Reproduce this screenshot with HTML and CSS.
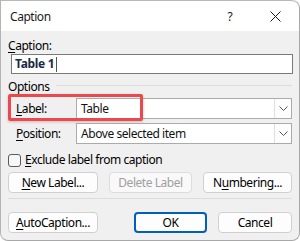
FILE: index.html
```html
<!DOCTYPE html>
<html>
<head>
<meta charset="utf-8">
<link rel="stylesheet" href="styles.css">
</head>
<body>
<div class="window">
  <div class="titlebar">
    <span class="title">Caption</span>
    <span class="help">?</span>
    <span class="close">
      <svg width="11" height="11" viewBox="0 0 11 11"><path d="M0.5 0.5L10.5 10.5M10.5 0.5L0.5 10.5" stroke="#1a1a1a" stroke-width="1" fill="none"/></svg>
    </span>
  </div>
  <div class="content">
    <div class="lbl caption-lbl"><u>C</u>aption:</div>
    <div class="textbox"><span class="tb-text">Table 1</span><span class="caret"></span></div>
    <div class="group-head"><span>Options</span><span class="group-line"></span></div>
    <div class="field-row row-label">
      <span class="field-lbl"><u>L</u>abel:</span>
      <div class="combo"><span class="combo-text">Table</span><span class="drop"><svg width="9" height="5" viewBox="0 0 9 5"><path d="M0.5 0.5L4.5 4.5L8.5 0.5" stroke="#555" fill="none"/></svg></span></div>
      <div class="highlight"></div>
    </div>
    <div class="field-row row-pos">
      <span class="field-lbl"><u>P</u>osition:</span>
      <div class="combo"><span class="combo-text">Above selected item</span><span class="drop"><svg width="9" height="5" viewBox="0 0 9 5"><path d="M0.5 0.5L4.5 4.5L8.5 0.5" stroke="#555" fill="none"/></svg></span></div>
    </div>
    <div class="check-row"><span class="checkbox"></span><span><u>E</u>xclude label from caption</span></div>
    <div class="btn-row row1">
      <button class="btn w-new"><u>N</u>ew Label...</button>
      <button class="btn w-del disabled">Delete Label</button>
      <button class="btn w-num">N<u>u</u>mbering...</button>
    </div>
    <div class="sep"></div>
    <div class="btn-row row2">
      <button class="btn w-auto"><u>A</u>utoCaption...</button>
      <button class="btn w-ok default">OK</button>
      <button class="btn w-cancel">Cancel</button>
    </div>
  </div>
</div>
</body>
</html>
```
FILE: styles.css
```css
* { box-sizing: border-box; }
html, body { margin: 0; padding: 0; background: #ffffff; }
body { font-family: "Noto Sans", "Open Sans", sans-serif; font-size: 12px; letter-spacing: -0.45px; color: #000; }
u { text-decoration: underline; text-underline-offset: 2px; }

.window {
  width: 300px; height: 241px;
  background: #f0f0f0;
  border: 1px solid #a8a8a8;
  border-top: none;
  border-left: 1px solid #b4b4b4;
  border-radius: 0 8px 8px 8px;
  overflow: hidden;
  position: relative;
}
.titlebar {
  height: 31px; background: #ffffff;
  display: flex; align-items: center;
  border-top: 1px solid #b8b8b8;
  border-top-right-radius: 8px;
}
.title { margin-left: 9px; color: #1a1a1a; font-size: 12px; flex: 1; line-height: 16px; margin-top: 1px; }
.help { width: 10px; margin-right: 35px; text-align: center; color: #1a1a1a; font-size: 12px; margin-top: 1px; }
.close { width: 11px; height: 11px; margin-right: 18px; display: flex; margin-top: 1px; }

.content { padding: 0 7px 0 7px; }
.lbl { line-height: 16px; height: 16px; }
.caption-lbl { margin-top: 7px; }
.textbox {
  margin-left: 3px; width: 282px; height: 20px;
  background: #fff; border: 1px solid #7a7a7a;
  display: flex; align-items: center; padding-left: 3px;
}
.tb-text { font-weight: 700; color: #1b2a48; line-height: 16px; letter-spacing: -0.3px; }
.caret { width: 1px; height: 15px; background: #555; margin-left: 2px; }

.group-head { margin-top: 5px; height: 16px; line-height: 16px; display: flex; align-items: center; }
.group-line { flex: 1; height: 1px; background: #dcdcdc; margin-left: 7px; margin-right: 0px; margin-top: -4px; }

.field-row { position: relative; display: flex; align-items: center; height: 21px; }
.row-label { margin-top: 3px; }
.row-pos { margin-top: 4px; }
.field-lbl { width: 62px; margin-left: 8px; line-height: 16px; }
.combo {
  width: 223px; height: 21px; background: #fff;
  border: 1px solid #ababab;
  display: flex; align-items: center; justify-content: space-between;
}
.combo-text { padding-left: 4px; line-height: 16px; color: #111; }
.drop {
  width: 17px; height: 19px; border-left: 1px solid #e0e0e0;
  background: #fdfdfd;
  display: flex; align-items: center; justify-content: center;
}
.highlight {
  position: absolute; left: 0px; top: -4px; width: 135px; height: 27px;
  border: 3px solid #e84a4f; border-radius: 2px;
  box-shadow: 0 1px 3px rgba(120,0,0,0.25);
  pointer-events: none;
}

.check-row { margin-top: 8px; height: 16px; display: flex; align-items: center; line-height: 16px; }
.checkbox {
  width: 13px; height: 13px; border: 1px solid #5a5a5a; border-radius: 3px;
  background: #f7f7f7; margin-right: 4px; margin-left: 0px;
}

.btn-row { display: flex; gap: 11px; }
.row1 { margin-top: 4px; }
.row2 { margin-top: 13px; }
.btn {
  height: 21px; font-family: inherit; font-size: 12px; color: #000; letter-spacing: -0.45px;
  background: #fdfdfd; border: 1px solid #d0d0d0; border-radius: 4px;
  padding: 0; line-height: 16px;
}
.btn.disabled { color: #a0a0a0; background: #f9f9f9; border-color: #dcdcdc; }
.btn.default { border: 2px solid #005fb8; }
.w-new { width: 90px; }
.w-del { width: 83px; }
.w-num { width: 89px; }
.w-auto { width: 90px; }
.w-ok { width: 73px; margin-left: 25px; }
.w-cancel { width: 74px; }
.sep { margin-top: 5px; height: 1px; background: #dcdcdc; width: 284px; }
```
